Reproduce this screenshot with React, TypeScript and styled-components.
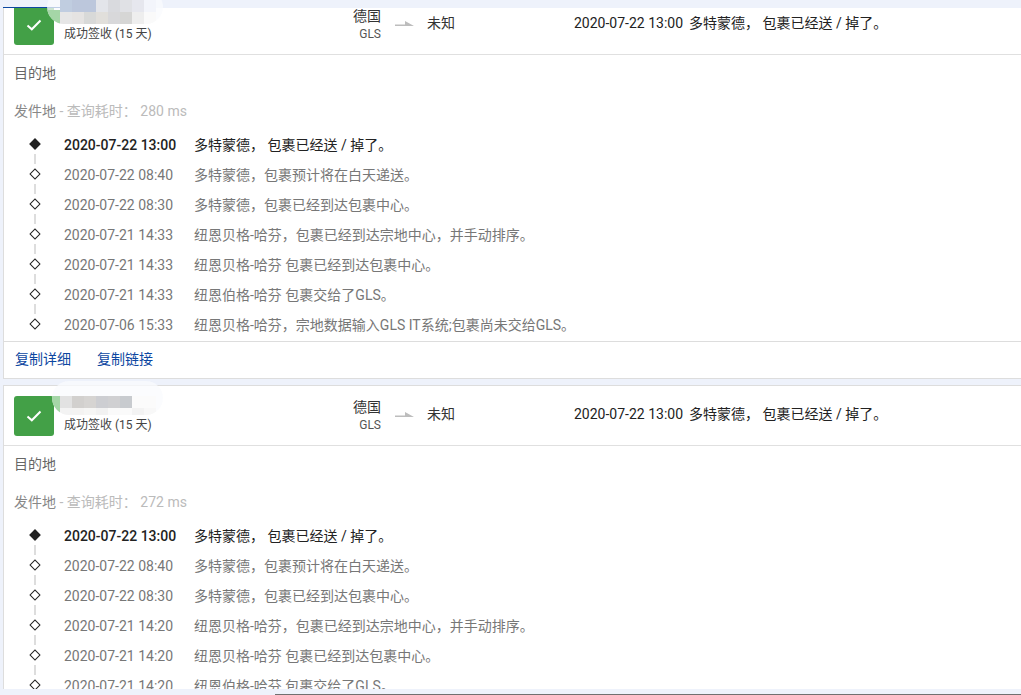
import React from "react";
import styled, { createGlobalStyle } from "styled-components";

const Global = createGlobalStyle`
  html, body { margin: 0; padding: 0; background: #eef2fb; overflow: hidden; }
  body { font-family: Roboto, "Noto Sans CJK SC", sans-serif; font-size: 14px; }
`;

const Viewport = styled.div`
  position: relative;
  width: 1021px;
  height: 695px;
  overflow: hidden;
  background: #eef2fb;
`;

const TopStrip = styled.div`
  position: absolute;
  left: 0;
  top: 0;
  width: 100%;
  height: 8px;
  background: #eef2fb;
  z-index: 1;
`;

const ActiveTab = styled.div`
  position: absolute;
  left: 3px;
  bottom: 0;
  width: 60px;
  height: 1px;
  background: #0d47a1;
`;

const BottomStrip = styled.div`
  position: absolute;
  left: 0;
  bottom: 0;
  width: 100%;
  height: 6px;
  background: #eef2fb;
  z-index: 1;
`;

const ScrollLine = styled.div`
  position: absolute;
  left: 275px;
  right: 0;
  bottom: 0;
  height: 1px;
  background: #707070;
`;

const List = styled.div`
  display: flex;
  flex-direction: column;
  gap: 6px;
  margin: -6px 0 0 3px;
  width: 1040px;
`;

const Card = styled.section`
  position: relative;
  background: #fff;
  border: 1px solid #ddd;
  border-right: 0;
`;

const Header = styled.header`
  display: flex;
  align-items: center;
  height: 60px;
  box-sizing: border-box;
  padding-left: 10px;
  border-bottom: 1px solid #e0e0e0;
`;

const StatusBlock = styled.div`
  display: flex;
  align-items: flex-start;
  gap: 10px;
  width: 260px;
  height: 40px;
`;

const StatusIcon = styled.div`
  display: flex;
  align-items: center;
  justify-content: center;
  flex: none;
  width: 40px;
  height: 40px;
  border-radius: 3px;
  background: #43a047;
`;

const StatusText = styled.div`
  margin-top: 20px;
  font-size: 12px;
  line-height: 18px;
  color: #444;
  white-space: nowrap;
`;

const Carrier = styled.div`
  width: 107px;
  text-align: right;
  color: #333;
  line-height: 18px;
`;

const CarrierName = styled.div`
  font-size: 12px;
  color: #555;
`;

const ArrowMark = styled.svg`
  flex: none;
  margin: 0 12px 2px 14px;
  width: 20px;
  height: 6px;
`;

const Destination = styled.div`
  width: 147px;
  margin-bottom: 4px;
  line-height: 20px;
  color: #333;
`;

const LastEvent = styled.div`
  display: flex;
  align-items: baseline;
  gap: 6px;
  margin-bottom: 4px;
  line-height: 20px;
  color: #222;
  white-space: nowrap;
`;

const TargetLine = styled.div`
  height: 36px;
  line-height: 36px;
  padding-left: 10px;
  color: #666;
`;

const OriginLine = styled.div`
  height: 38px;
  line-height: 40px;
  padding-left: 10px;
  color: #888;
`;

const Note = styled.span`
  color: #bbb;
`;

const Timeline = styled.ol`
  list-style: none;
  margin: 0;
  padding: 0;
`;

const Row = styled.li<{ $current?: boolean; $last?: boolean }>`
  position: relative;
  display: flex;
  align-items: baseline;
  height: 30px;
  line-height: 32px;
  padding-left: 60px;
  color: ${(p) => (p.$current ? "#222" : "#777")};
  white-space: nowrap;
  &::before {
    content: "";
    position: absolute;
    left: 27px;
    top: 11px;
    width: 8px;
    height: 8px;
    box-sizing: border-box;
    transform: rotate(45deg);
    border: 1px solid #222;
    background: ${(p) => (p.$current ? "#222" : "#fff")};
  }
  &::after {
    content: "";
    display: ${(p) => (p.$last ? "none" : "block")};
    position: absolute;
    left: 30px;
    top: 25px;
    width: 2px;
    height: 10px;
    background: #ddd;
  }
`;

const When = styled.span<{ $current?: boolean }>`
  width: 130px;
  flex: none;
  font-weight: ${(p) => (p.$current ? 500 : 400)};
`;

const Footer = styled.footer`
  display: flex;
  gap: 26px;
  align-items: center;
  height: 32px;
  padding: 0 0 4px 11px;
  border-top: 1px solid #ddd;
  margin-top: 2px;
`;

const CopyLink = styled.a`
  color: #0d47a1;
  cursor: pointer;
`;

const Blob = styled.div<{ $left: number; $inset: number }>`
  position: absolute;
  left: ${(p) => p.$left}px;
  right: calc(100% - 159px);
  top: -5px;
  height: 34px;
  box-sizing: border-box;
  padding: ${(p) => p.$inset}px 0 0 ${(p) => 56 - p.$left}px;
  border-radius: 17px;
  background: rgba(250, 251, 253, 0.75);
  z-index: 2;
  overflow: hidden;
`;

const Patch = styled.div<{ $width: number; $height: number }>`
  position: absolute;
  left: 0;
  bottom: 0;
  width: ${(p) => p.$width}px;
  height: ${(p) => p.$height}px;
  background: #a5d6a7;
`;

const Mosaic = styled.div`
  display: grid;
  grid-template-columns: repeat(8, 12px);
  grid-auto-rows: 12px;
`;

const Cell = styled.i<{ $c: string }>`
  display: block;
  background: ${(p) => p.$c};
`;

type Ev = [string, string];

const tail = "多特蒙德， 包裹已经送 / 掉了。";

const firstEvents: Ev[] = [
  ["2020-07-22 13:00", tail],
  ["2020-07-22 08:40", "多特蒙德，包裹预计将在白天递送。"],
  ["2020-07-22 08:30", "多特蒙德，包裹已经到达包裹中心。"],
  ["2020-07-21 14:33", "纽恩贝格-哈芬，包裹已经到达宗地中心，并手动排序。"],
  ["2020-07-21 14:33", "纽恩贝格-哈芬 包裹已经到达包裹中心。"],
  ["2020-07-21 14:33", "纽恩伯格-哈芬 包裹交给了GLS。"],
  ["2020-07-06 15:33", "纽恩贝格-哈芬，宗地数据输入GLS IT系统;包裹尚未交给GLS。"],
];

const secondEvents: Ev[] = firstEvents.map(([d, t]) => [d.replace("14:33", "14:20"), t]);

const firstCells = [
  "#c0cde0", "#bcc7dc", "#bcc7dc", "#e3e5ea", "#d9dade", "#e0e1e5", "#e6e7ee", "#f3f5fb",
  "#e6e6e6", "#e5e3e2", "#d8d9d8", "#e1dfdb", "#d8d8da", "#d6d6d5", "#eeeeee", "#fafafa",
];

const secondCells = [
  "#e2e2e2", "#d2d0ce", "#d6d4d2", "#cdced2", "#d0d0d2", "#c8cbcf", "#fbfbfb", "#fbfbfb",
  "#f3f3f3", "#f4f3f2", "#f6f6f5", "#f2f2f2", "#fafafa", "#fafafa", "#f3f3f3", "#f8f8f8",
];

type ShipmentProps = {
  ms: number;
  events: Ev[];
  cells: string[];
  left: number;
  inset: number;
  patch: number;
};

const Shipment = ({ ms, events, cells, left, inset, patch }: ShipmentProps) => (
  <Card>
    <Blob $left={left} $inset={inset}>
      <Patch $width={56 - left} $height={patch} />
      <Mosaic>
        {cells.map((c, i) => (
          <Cell key={i} $c={c} />
        ))}
      </Mosaic>
    </Blob>
    <Header>
      <StatusBlock>
        <StatusIcon>
          <svg width="16" height="12" viewBox="0 0 16 12" fill="none">
            <path d="M1.5 6.5 L5.8 10.3 L14.5 1.5" stroke="#fff" strokeWidth="2" />
          </svg>
        </StatusIcon>
        <StatusText>成功签收 (15 天)</StatusText>
      </StatusBlock>
      <Carrier>
        德国
        <CarrierName>GLS</CarrierName>
      </Carrier>
      <ArrowMark viewBox="0 0 20 6">
        <path d="M0 3.5 H10 V0 L19 5 H0 Z" fill="#bdbdbd" />
      </ArrowMark>
      <Destination>未知</Destination>
      <LastEvent>
        <span>2020-07-22 13:00</span>
        <span>{tail}</span>
      </LastEvent>
    </Header>
    <TargetLine>目的地</TargetLine>
    <OriginLine>
      发件地<Note> - 查询耗时： {ms} ms</Note>
    </OriginLine>
    <Timeline>
      {events.map(([when, what], i) => (
        <Row key={i} $current={i === 0} $last={i === events.length - 1}>
          <When $current={i === 0}>{when}</When>
          <span>{what}</span>
        </Row>
      ))}
    </Timeline>
    <Footer>
      <CopyLink>复制详细</CopyLink>
      <CopyLink>复制链接</CopyLink>
    </Footer>
  </Card>
);

export default function App() {
  return (
    <Viewport>
      <Global />
      <TopStrip>
        <ActiveTab />
      </TopStrip>
      <List>
        <Shipment ms={280} events={firstEvents} cells={firstCells} left={43} inset={10} patch={14} />
        <Shipment ms={272} events={secondEvents} cells={secondCells} left={48} inset={15} patch={19} />
      </List>
      <BottomStrip>
        <ScrollLine />
      </BottomStrip>
    </Viewport>
  );
}
